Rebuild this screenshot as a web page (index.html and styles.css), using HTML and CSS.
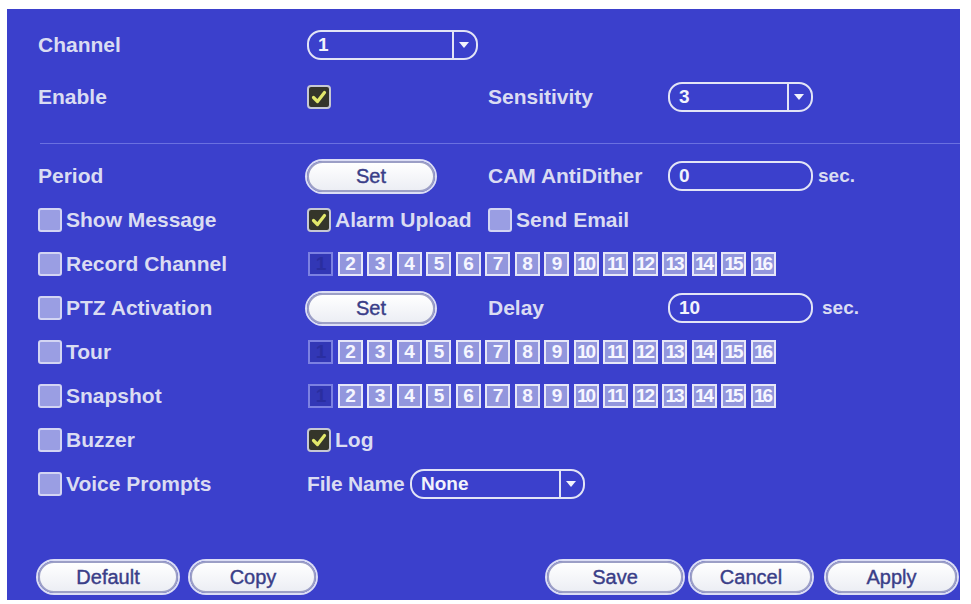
FILE: index.html
```html
<!DOCTYPE html>
<html>
<head>
<meta charset="utf-8">
<link rel="stylesheet" href="styles.css">
</head>
<body>
<div class="panel">
  <div class="row first">
    <div class="c1">Channel</div>
    <div class="select w-ch"><span class="val">1</span><span class="arrow"><i></i></span></div>
  </div>
  <div class="row en">
    <div class="c1">Enable</div>
    <div class="c2"><span class="cb on"><svg viewBox="0 0 20 20"><path d="M4.5 10.5 L8.5 14.5 L15.5 5.5"/></svg></span></div>
    <div class="c3">Sensitivity</div>
    <div class="select w-sens"><span class="val">3</span><span class="arrow"><i></i></span></div>
  </div>
  <div class="divider"></div>
  <div class="row period">
    <div class="c1">Period</div>
    <div class="c2"><span class="btn set">Set</span></div>
    <div class="c3">CAM AntiDither</div>
    <div class="input w-in"><span class="val">0</span></div><span class="unit">sec.</span>
  </div>
  <div class="row">
    <div class="c1"><span class="cb"></span><span class="lbl">Show Message</span></div>
    <div class="c2"><span class="cb on"><svg viewBox="0 0 20 20"><path d="M4.5 10.5 L8.5 14.5 L15.5 5.5"/></svg></span><span class="lbl">Alarm Upload</span></div>
    <div class="c3"><span class="cb"></span><span class="lbl">Send Email</span></div>
  </div>
  <div class="row">
    <div class="c1"><span class="cb"></span><span class="lbl">Record Channel</span></div>
    <div class="chans">
      <span class="ch off">1</span><span class="ch">2</span><span class="ch">3</span><span class="ch">4</span><span class="ch">5</span><span class="ch">6</span><span class="ch">7</span><span class="ch">8</span><span class="ch">9</span><span class="ch">10</span><span class="ch">11</span><span class="ch">12</span><span class="ch">13</span><span class="ch">14</span><span class="ch">15</span><span class="ch">16</span>
    </div>
  </div>
  <div class="row">
    <div class="c1"><span class="cb"></span><span class="lbl">PTZ Activation</span></div>
    <div class="c2"><span class="btn set">Set</span></div>
    <div class="c3">Delay</div>
    <div class="input w-in"><span class="val">10</span></div><span class="unit u2">sec.</span>
  </div>
  <div class="row">
    <div class="c1"><span class="cb"></span><span class="lbl">Tour</span></div>
    <div class="chans">
      <span class="ch off">1</span><span class="ch">2</span><span class="ch">3</span><span class="ch">4</span><span class="ch">5</span><span class="ch">6</span><span class="ch">7</span><span class="ch">8</span><span class="ch">9</span><span class="ch">10</span><span class="ch">11</span><span class="ch">12</span><span class="ch">13</span><span class="ch">14</span><span class="ch">15</span><span class="ch">16</span>
    </div>
  </div>
  <div class="row">
    <div class="c1"><span class="cb"></span><span class="lbl">Snapshot</span></div>
    <div class="chans">
      <span class="ch off">1</span><span class="ch">2</span><span class="ch">3</span><span class="ch">4</span><span class="ch">5</span><span class="ch">6</span><span class="ch">7</span><span class="ch">8</span><span class="ch">9</span><span class="ch">10</span><span class="ch">11</span><span class="ch">12</span><span class="ch">13</span><span class="ch">14</span><span class="ch">15</span><span class="ch">16</span>
    </div>
  </div>
  <div class="row">
    <div class="c1"><span class="cb"></span><span class="lbl">Buzzer</span></div>
    <div class="c2"><span class="cb on"><svg viewBox="0 0 20 20"><path d="M4.5 10.5 L8.5 14.5 L15.5 5.5"/></svg></span><span class="lbl">Log</span></div>
  </div>
  <div class="row">
    <div class="c1"><span class="cb"></span><span class="lbl">Voice Prompts</span></div>
    <div class="fname">File Name</div>
    <div class="select w-fn"><span class="val">None</span><span class="arrow"><i></i></span></div>
  </div>
  <div class="buttons">
    <span class="btn b-def">Default</span>
    <span class="btn b-copy">Copy</span>
    <span class="spacer"></span>
    <span class="btn b-save">Save</span>
    <span class="btn b-cancel">Cancel</span>
    <span class="btn b-apply">Apply</span>
  </div>
</div>
</body>
</html>
```
FILE: styles.css
```css
body {
  margin: 0;
  background: #ffffff;
  font-family: "Liberation Sans", Arial, sans-serif;
}

.panel {
  margin: 9px 0 0 7px;
  width: 953px;
  height: 591px;
  box-sizing: border-box;
  padding: 21px 3px 0 31px;
  background: #3b40cc;
  color: #dadcf2;
  font-size: 21px;
  font-weight: bold;
  display: flex;
  flex-direction: column;
}

.row {
  display: flex;
  align-items: center;
  height: 30px;
  margin-top: 14px;
  white-space: nowrap;
}
.row.first { margin-top: 0; }
.row.en { margin-top: 22px; }
.row.period { margin-top: 17px; }

.c1 {
  width: 269px;
  display: flex;
  align-items: center;
}
.c2 {
  width: 181px;
  display: flex;
  align-items: center;
}
.c3 {
  width: 180px;
  display: flex;
  align-items: center;
}

.divider {
  height: 1px;
  margin: 31px -3px 0 2px;
  background: #6a70e0;
}

.lbl { margin-left: 4px; }

.cb {
  width: 24px;
  height: 24px;
  box-sizing: border-box;
  border: 2px solid #d3d5f3;
  border-radius: 3px;
  background: #9a9ee3;
  display: inline-flex;
  flex-shrink: 0;
}
.cb.on {
  background: #34352a;
  border-color: #c6c8d4;
  border-radius: 4px;
}
.cb svg {
  width: 20px;
  height: 20px;
}
.cb svg path {
  fill: none;
  stroke: #e2e86a;
  stroke-width: 3.2;
  stroke-linecap: round;
  stroke-linejoin: round;
}

.select, .input {
  height: 30px;
  box-sizing: border-box;
  border: 2px solid #e2e4f6;
  border-radius: 14px;
  display: flex;
  align-items: stretch;
  color: #f2f3fc;
  font-size: 19px;
}
.select .val, .input .val {
  flex: 1;
  display: flex;
  align-items: center;
  padding-left: 9px;
}
.select .arrow {
  width: 22px;
  border-left: 2px solid #e2e4f6;
  display: flex;
  align-items: center;
  justify-content: center;
}
.select .arrow i {
  width: 0;
  height: 0;
  border-left: 5px solid transparent;
  border-right: 5px solid transparent;
  border-top: 6px solid #f2f3fc;
  margin-right: 2px;
}
.w-ch { width: 171px; }
.w-sens { width: 145px; }
.w-in { width: 145px; }
.w-fn { width: 175px; }

.unit {
  margin-left: 5px;
  font-size: 19px;
}
.unit.u2 { margin-left: 9px; }

.fname {
  width: 103px;
  font-size: 21px;
  letter-spacing: -0.2px;
}

.chans {
  display: flex;
  gap: 4.5px;
  margin-left: 1px;
}
.ch {
  width: 25px;
  height: 24px;
  box-sizing: border-box;
  border: 2px solid #e6e7f8;
  background: #9296dd;
  color: #f6f6ff;
  font-size: 19px;
  letter-spacing: -2px;
  display: flex;
  align-items: center;
  justify-content: center;
  padding-right: 1px;
}
.ch.off {
  background: #3237b6;
  border-color: #7c81e2;
  color: #2a2ea0;
}

.btn {
  height: 31px;
  box-sizing: border-box;
  border: 2px solid #9c9fc6;
  border-radius: 16px;
  box-shadow: 0 0 0 2px #dcdef5;
  background: linear-gradient(#ffffff, #eceef4);
  color: #3a3e88;
  font-weight: normal;
  -webkit-text-stroke: 0.4px #3a3e88;
  font-size: 20px;
  display: flex;
  align-items: center;
  justify-content: center;
}
.btn.set { width: 128px; }

.buttons {
  display: flex;
  align-items: center;
  margin-top: 62px;
}
.buttons .btn { height: 32px; }
.spacer { flex: 1; }
.b-def { width: 140px; }
.b-copy { width: 126px; margin-left: 12px; }
.b-save { width: 136px; }
.b-cancel { width: 122px; margin-left: 7px; }
.b-apply { width: 131px; margin-left: 14px; }
```
